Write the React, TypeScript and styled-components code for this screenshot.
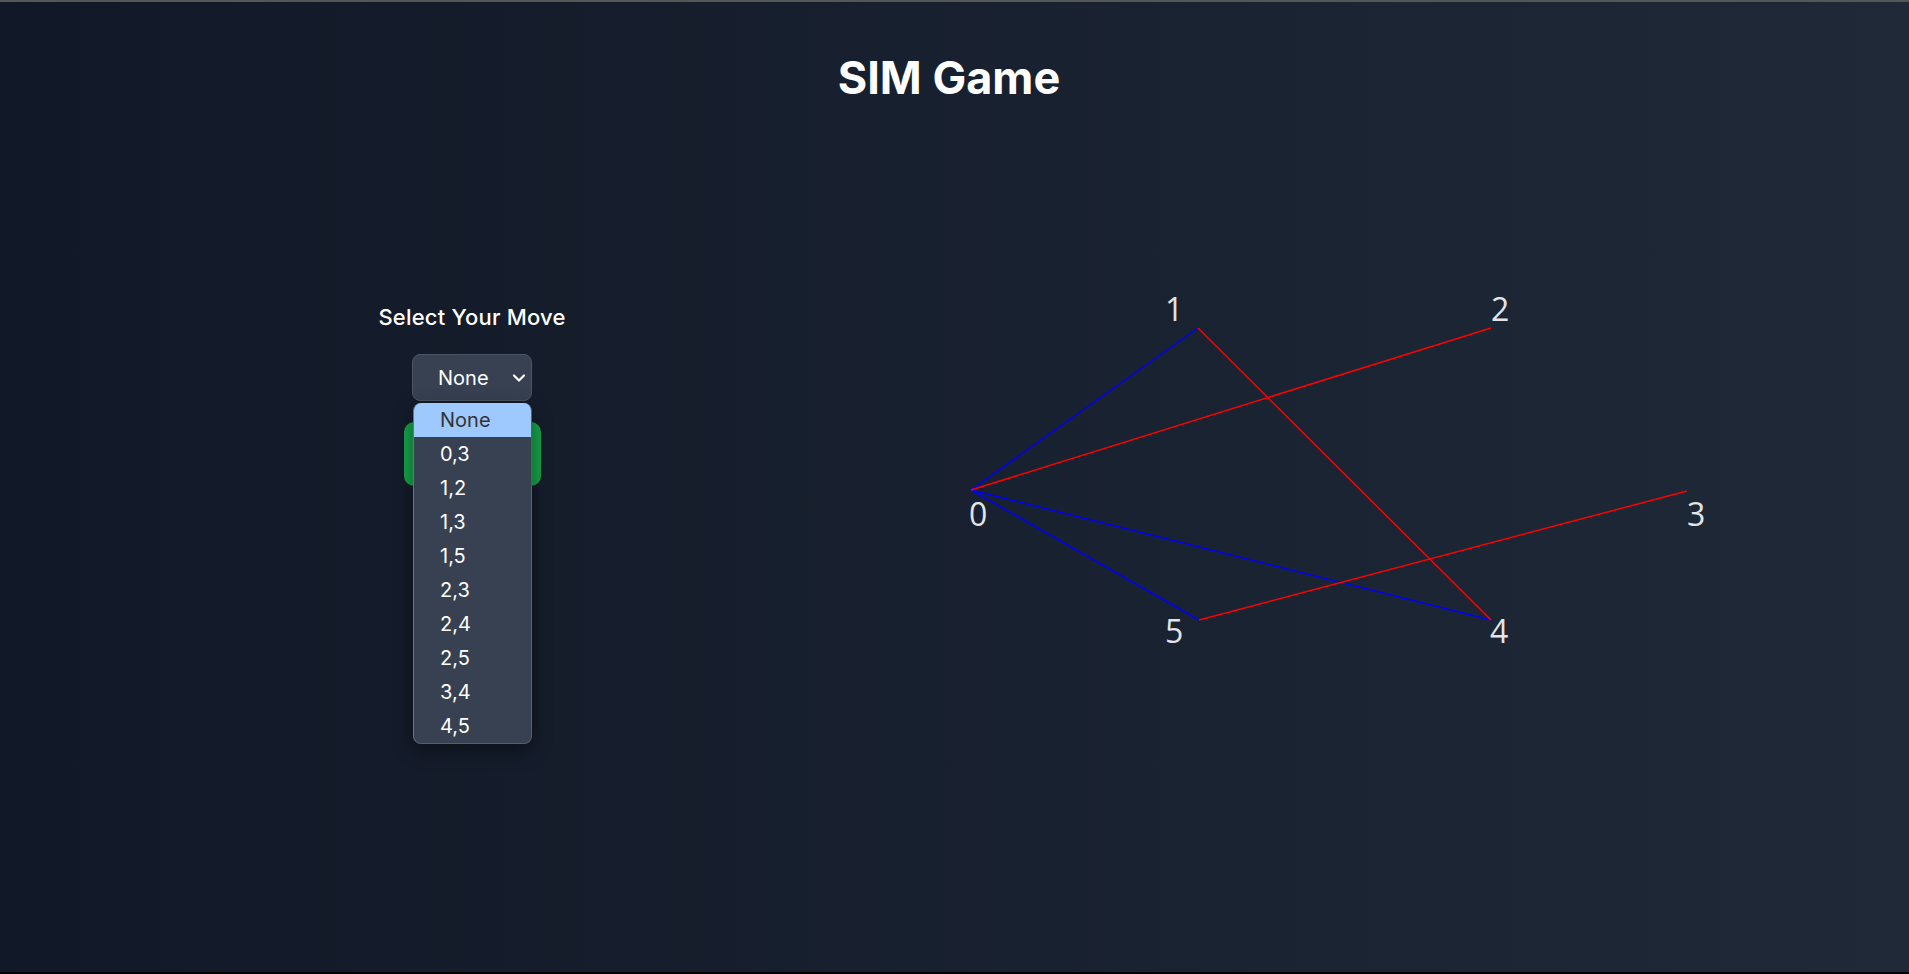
import React from "react";
import styled, { createGlobalStyle } from "styled-components";

const GlobalStyle = createGlobalStyle`
	html, body {
		margin: 0;
		padding: 0;
	}
	body {
		font-family: Inter, "Liberation Sans", sans-serif;
		background: #111827;
	}
	* {
		box-sizing: border-box;
	}
`;

type Node = { id: number; x: number; y: number; lx: number; ly: number };
type Edge = { a: number; b: number; owner: "player" | "computer" };

// node positions inside the 800x400 board
const nodes: Node[] = [
	{ id: 0, x: 31, y: 210, lx: 29, ly: 246 },
	{ id: 1, x: 258, y: 48, lx: 225, ly: 41 },
	{ id: 2, x: 551, y: 48, lx: 551, ly: 41 },
	{ id: 3, x: 747, y: 211, lx: 747, ly: 246 },
	{ id: 4, x: 551, y: 340, lx: 550, ly: 363 },
	{ id: 5, x: 259, y: 340, lx: 225, ly: 363 },
];

const edges: Edge[] = [
	{ a: 0, b: 1, owner: "player" },
	{ a: 0, b: 5, owner: "player" },
	{ a: 0, b: 4, owner: "player" },
	{ a: 0, b: 2, owner: "computer" },
	{ a: 1, b: 4, owner: "computer" },
	{ a: 5, b: 3, owner: "computer" },
];

const moves = ["None", "0,3", "1,2", "1,3", "1,5", "2,3", "2,4", "2,5", "3,4", "4,5"];

const Page = styled.div`
	min-height: 974px;
	height: 974px;
	border-top: 2px solid #565656;
	border-bottom: 2px solid #000;
	background: linear-gradient(to right, #111827, #1f2937);
	padding-top: 53px;
	overflow: hidden;
`;

const Title = styled.h1`
	margin: 0;
	padding-right: 11px;
	text-align: center;
	color: #fff;
	font-size: 45px;
	line-height: 45px;
	font-weight: 700;
`;

const Board = styled.div`
	display: flex;
	align-items: flex-start;
	margin-top: 180px;
`;

const ControlPanel = styled.div`
	width: 944px;
	padding-top: 23px;
	display: flex;
	flex-direction: column;
	align-items: center;
`;

const MoveLabel = styled.div`
	color: #fff;
	font-size: 22px;
	line-height: 28px;
	font-weight: 500;
	letter-spacing: 0.2px;
`;

const SelectWrap = styled.div`
	position: relative;
	margin-top: 23px;
	z-index: 2;
`;

const SelectBox = styled.div`
	width: 120px;
	height: 47px;
	background: #374151;
	border: 1px solid #4b5563;
	border-radius: 8px;
	display: flex;
	align-items: center;
	justify-content: space-between;
	padding: 0 5px 0 25px;
	color: #fff;
	font-size: 20px;
`;

const OptionList = styled.div`
	position: absolute;
	top: 49px;
	left: 1px;
	width: 119px;
	background: #374151;
	border: 1px solid #565e6c;
	border-left-color: #6b7280;
	border-top: none;
	border-radius: 8px;
	overflow: hidden;
	box-shadow: 0 6px 20px rgba(0, 0, 0, 0.45);
`;

const OptionItem = styled.div<{ $active?: boolean }>`
	height: 34px;
	line-height: 34px;
	padding-left: 26px;
	font-size: 20px;
	color: ${(p) => (p.$active ? "#333" : "#fff")};
	background: ${(p) => (p.$active ? "#9ec9ff" : "transparent")};
`;

const SubmitButton = styled.button`
	margin-top: 21px;
	width: 137px;
	height: 64px;
	border: none;
	border-radius: 10px;
	background: #16a34a;
	color: #fff;
	font-family: inherit;
	font-size: 20px;
	font-weight: 600;
`;

const GraphPanel = styled.div`
	width: 800px;
	height: 400px;
	margin-left: -4px;
`;

const NodeLabel = styled.text`
	font-family: "Open Sans", "Noto Sans", sans-serif;
	font-size: 32px;
	fill: #e2e4e8;
`;

function Chevron() {
	return (
		<svg width="14" height="10" viewBox="0 0 14 10">
			<path d="M2 2.5 L7 7.5 L12 2.5" fill="none" stroke="#fff" strokeWidth="2.2" strokeLinecap="round" strokeLinejoin="round" />
		</svg>
	);
}

function Graph() {
	const at = (id: number) => nodes.find((n) => n.id === id)!;
	return (
		<svg width="800" height="400" viewBox="0 0 800 400">
			{edges.map((e) => (
				<line
					key={`${e.a}-${e.b}`}
					x1={at(e.a).x}
					y1={at(e.a).y}
					x2={at(e.b).x}
					y2={at(e.b).y}
					stroke={e.owner === "player" ? "#0000ff" : "#ff0000"}
					strokeWidth={1.5}
				/>
			))}
			{nodes.map((n) => (
				<NodeLabel key={n.id} x={n.lx} y={n.ly}>
					{n.id}
				</NodeLabel>
			))}
		</svg>
	);
}

export default function App() {
	return (
		<Page>
			<GlobalStyle />
			<Title>SIM Game</Title>
			<Board>
				<ControlPanel>
					<MoveLabel>Select Your Move</MoveLabel>
					<SelectWrap>
						<SelectBox>
							<span>None</span>
							<Chevron />
						</SelectBox>
						<OptionList>
							{moves.map((m, i) => (
								<OptionItem key={m} $active={i === 0}>
									{m}
								</OptionItem>
							))}
						</OptionList>
					</SelectWrap>
					<SubmitButton>Submit</SubmitButton>
				</ControlPanel>
				<GraphPanel>
					<Graph />
				</GraphPanel>
			</Board>
		</Page>
	);
}
